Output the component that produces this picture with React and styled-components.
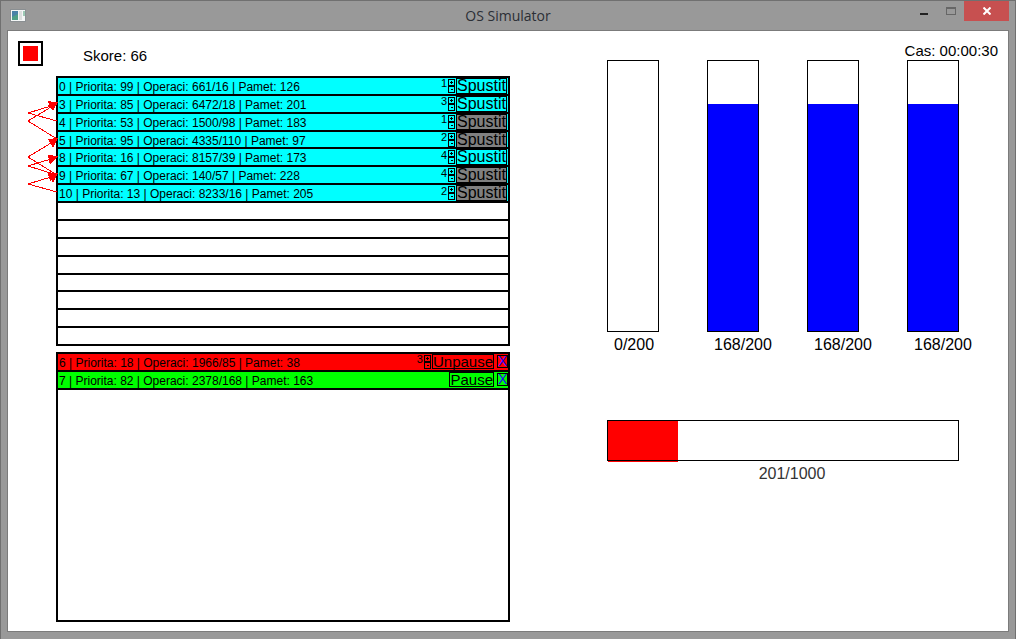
import React from 'react';
import styled, { createGlobalStyle } from 'styled-components';

const GlobalStyle = createGlobalStyle`
  * {
    box-sizing: border-box;
  }

  body {
    margin: 0;
    font-family: "Liberation Sans", Arial, sans-serif;
    color: #000;
  }

  button {
    margin: 0;
    padding: 0;
    font-family: inherit;
    color: inherit;
    background: none;
    border: 0;
    border-radius: 0;
  }
`;

const Window = styled.div`
  display: flex;
  flex-direction: column;
  min-height: 100vh;
  padding: 0 6px 7px;
  background: #999;
  border: 1px solid #707070;
`;

const TitleBar = styled.header`
  display: grid;
  grid-template-columns: 1fr auto 1fr;
  align-items: start;
  height: 29px;
`;

const AppIcon = styled.svg`
  margin: 8px 0 0 3px;
`;

const Title = styled.h1`
  margin: 0;
  font-family: "Open Sans", "Noto Sans", sans-serif;
  font-size: 14px;
  font-weight: 400;
  line-height: 29px;
  color: #2b2f36;
`;

const WindowButtons = styled.div`
  display: flex;
  justify-content: flex-end;
`;

const WindowButton = styled.button`
  width: ${props => (props.$close ? 45 : 27)}px;
  height: 20px;
  background: ${props => (props.$close ? '#c75050' : 'none')};

  svg {
    display: block;
    margin: 0 auto;
  }
`;

const Content = styled.main`
  display: grid;
  flex: 1;
  grid-template-columns: 502fr 401fr;
  column-gap: 97px;
  background: #fff;
  border: 1px solid #7b7b7b;
`;

const Toolbar = styled.div`
  display: flex;
  align-items: center;
  gap: 40px;
  height: 45px;
  padding-left: 10px;
  font-size: 15px;
`;

const StopButton = styled.button`
  width: 25px;
  height: 25px;
  padding: 3px;
  border: 2px solid #000;

  &::before {
    content: '';
    display: block;
    height: 15px;
    background: #f00;
  }
`;

const Score = styled.span`
  padding-top: 4px;
`;

const Queue = styled.div`
  display: flex;
  padding-left: 20px;
`;

const Links = styled.svg`
  position: relative;
  flex: none;
  margin-right: -2px;
`;

// the last row has no separator of its own, so it is a bit shorter
const List = styled.ul`
  display: grid;
  flex: 1;
  grid-template-rows: repeat(14, 9fr) 8fr;
  height: 270px;
  margin: 0;
  padding: 0;
  list-style: none;
  border: 2px solid #000;
`;

const RunningList = styled(List)`
  margin: 6px 0 9px 48px;
`;

const Row = styled.li`
  display: flex;
  align-items: center;
  min-height: 0;
  padding-left: 1px;
  font-size: 12px;
  line-height: 16px;
  white-space: nowrap;
  background: ${props => props.$color || '#fff'};
  border-bottom: ${props => (props.$last ? 0 : 2)}px solid #000;
`;

const Info = styled.span`
  flex: 1;
  padding-top: 2px;
`;

const Priority = styled.span`
  padding: 0 1px 5px 0;
  font-size: 11px;
  line-height: 12px;
`;

const Stepper = styled.div`
  display: flex;
  flex-direction: column;
  margin-right: 1px;
`;

const StepButton = styled.button`
  width: 7px;
  height: 7px;
  border: 1px solid #000;

  svg {
    display: block;
  }
`;

const RunButton = styled.button`
  width: 51px;
  height: 16px;
  margin-right: 1px;
  font-size: 16px;
  line-height: 14px;
  border: 1px solid #000;

  &:disabled {
    color: #000;
    background: #808080;
  }
`;

const PauseButton = styled.button`
  height: 15px;
  margin-right: 3px;
  font-size: 15px;
  line-height: 13px;
  border: 1px solid #000;
`;

const KillButton = styled.button`
  width: 11px;
  height: 13px;
  font-size: 14px;
  line-height: 11px;
  color: #20f;
  border: 1px solid #000;
`;

const Clock = styled.div`
  height: 29px;
  padding: 11px 10px 0 0;
  font-size: 15px;
  line-height: 17px;
  text-align: right;
`;

const Cores = styled.div`
  display: flex;
  justify-content: space-between;
  padding-right: 49px;
`;

const Core = styled.div`
  width: 52px;
`;

const CoreBar = styled.div`
  display: flex;
  flex-direction: column;
  justify-content: flex-end;
  height: 272px;
  border: 1px solid #000;
`;

const CoreFill = styled.div`
  background: #00f;
`;

const CoreLabel = styled.div`
  padding: 4px 0 0 7px;
  font-size: 16px;
  line-height: 18px;
  white-space: nowrap;
`;

const Memory = styled.div`
  isolation: isolate;
  margin: 66px 49px 0 0;
`;

const MemoryBar = styled.div`
  height: 41px;
  border: 1px solid #000;
`;

// one pixel taller than the frame, which is painted over it
const MemoryFill = styled.div`
  position: relative;
  z-index: -1;
  height: 41px;
  background: #f00;
`;

const MemoryLabel = styled.div`
  padding: 4px 0 0 18px;
  font-size: 16px;
  line-height: 18px;
  text-align: center;
  color: #333;
`;

const waiting = [
  { id: 0, priority: 99, ops: '661/16', memory: 126, level: 1, ready: true },
  { id: 3, priority: 85, ops: '6472/18', memory: 201, level: 3, ready: true },
  { id: 4, priority: 53, ops: '1500/98', memory: 183, level: 1 },
  { id: 5, priority: 95, ops: '4335/110', memory: 97, level: 2 },
  { id: 8, priority: 16, ops: '8157/39', memory: 173, level: 4, ready: true },
  { id: 9, priority: 67, ops: '140/57', memory: 228, level: 4 },
  { id: 10, priority: 13, ops: '8233/16', memory: 205, level: 2 },
];

const running = [
  { id: 6, priority: 18, ops: '1966/85', memory: 38, level: 3, paused: true },
  { id: 7, priority: 82, ops: '2378/168', memory: 163 },
];

const cores = [0, 168, 168, 168];
const CORE_MAX = 200;

const memory = { used: 201, max: 1000 };

const emptyRows = Array.from({ length: 15 - waiting.length }, (_, i) => i);

const describe = p =>
  `${p.id} | Priorita: ${p.priority} | Operaci: ${p.ops} | Pamet: ${p.memory}`;

const PriorityStepper = ({ level }) => (
  <>
    <Priority>{level}</Priority>
    <Stepper>
      <StepButton aria-label="Zvysit">
        <svg width="5" height="5" shapeRendering="crispEdges">
          <path d="M1 2.5h3M2.5 1v3" stroke="#000" />
        </svg>
      </StepButton>
      <StepButton aria-label="Snizit">
        <svg width="5" height="5" shapeRendering="crispEdges">
          <path d="M2 2.5h2" stroke="#000" />
        </svg>
      </StepButton>
    </Stepper>
  </>
);

const Dependencies = () => (
  <Links width="30" height="270" stroke="#f00" fill="none" shapeRendering="crispEdges">
    <path d="M29 45L0 37L23 30" />
    <path d="M29 63L0 45L23 31" />
    <path d="M29 99L0 81L23 67" />
    <path d="M29 99L0 90L23 83" />
    <path d="M29 116L0 108L23 101" />
    <g fill="#f00" stroke="none">
      <path d="M30 27L20 25L22 32Z" />
      <path d="M30 26L20 29L25 35Z" />
      <path d="M30 62L20 63L25 72Z" />
      <path d="M30 80L20 79L22 89Z" />
      <path d="M30 97L20 97L25 107Z" />
      <path d="M30 98L20 98L22 105Z" />
    </g>
  </Links>
);

const App = () => {
  return (
    <Window>
      <GlobalStyle />
      <TitleBar>
        <AppIcon width="16" height="13" viewBox="0 0 16 13">
          <rect x="0.5" y="0.5" width="15" height="12" fill="#f4f6f6" stroke="#8a8f92" />
          <rect x="2" y="2" width="6" height="9" fill="#4f9f86" />
          <path d="M2 2h6v3L2 8z" fill="#4a82a8" />
          <rect x="9" y="2" width="3" height="9" fill="#dcdede" />
          <rect x="13" y="2" width="2" height="5" fill="#9cc8b4" />
        </AppIcon>
        <Title>OS Simulator</Title>
        <WindowButtons>
          <WindowButton aria-label="Minimize">
            <svg width="8" height="14" shapeRendering="crispEdges">
              <rect x="0" y="9" width="8" height="2" fill="#222" />
            </svg>
          </WindowButton>
          <WindowButton aria-label="Maximize">
            <svg width="10" height="14" shapeRendering="crispEdges">
              <path d="M0.5 3v7.5h9v-7.5M0 3.5h10M0 4.5h10" fill="none" stroke="#666" />
            </svg>
          </WindowButton>
          <WindowButton $close aria-label="Close">
            <svg width="8" height="8" viewBox="0 0 8 8">
              <path d="M0.5 0.5L7.5 7.5M7.5 0.5L0.5 7.5" stroke="#fff" strokeWidth="2" />
            </svg>
          </WindowButton>
        </WindowButtons>
      </TitleBar>

      <Content>
        <section>
          <Toolbar>
            <StopButton aria-label="Stop" />
            <Score>Skore: 66</Score>
          </Toolbar>
          <Queue>
            <Dependencies />
            <List>
              {waiting.map(p => (
                <Row key={p.id} $color="#0ff">
                  <Info>{describe(p)}</Info>
                  <PriorityStepper level={p.level} />
                  <RunButton disabled={!p.ready}>Spustit</RunButton>
                </Row>
              ))}
              {emptyRows.map(i => (
                <Row key={`empty-${i}`} $last={i === emptyRows.length - 1} />
              ))}
            </List>
          </Queue>
          <RunningList>
            {running.map(p => (
              <Row key={p.id} $color={p.paused ? '#f00' : '#0f0'}>
                <Info>{describe(p)}</Info>
                {p.paused && <PriorityStepper level={p.level} />}
                <PauseButton>{p.paused ? 'Unpause' : 'Pause'}</PauseButton>
                <KillButton>X</KillButton>
              </Row>
            ))}
          </RunningList>
        </section>

        <section>
          <Clock>Cas: 00:00:30</Clock>
          <Cores>
            {cores.map((load, i) => (
              <Core key={i}>
                <CoreBar>
                  <CoreFill style={{ height: `${(load / CORE_MAX) * 100}%` }} />
                </CoreBar>
                <CoreLabel>{load}/{CORE_MAX}</CoreLabel>
              </Core>
            ))}
          </Cores>
          <Memory>
            <MemoryBar>
              <MemoryFill style={{ width: `${(memory.used / memory.max) * 100}%` }} />
            </MemoryBar>
            <MemoryLabel>{memory.used}/{memory.max}</MemoryLabel>
          </Memory>
        </section>
      </Content>
    </Window>
  );
};

export default App;
